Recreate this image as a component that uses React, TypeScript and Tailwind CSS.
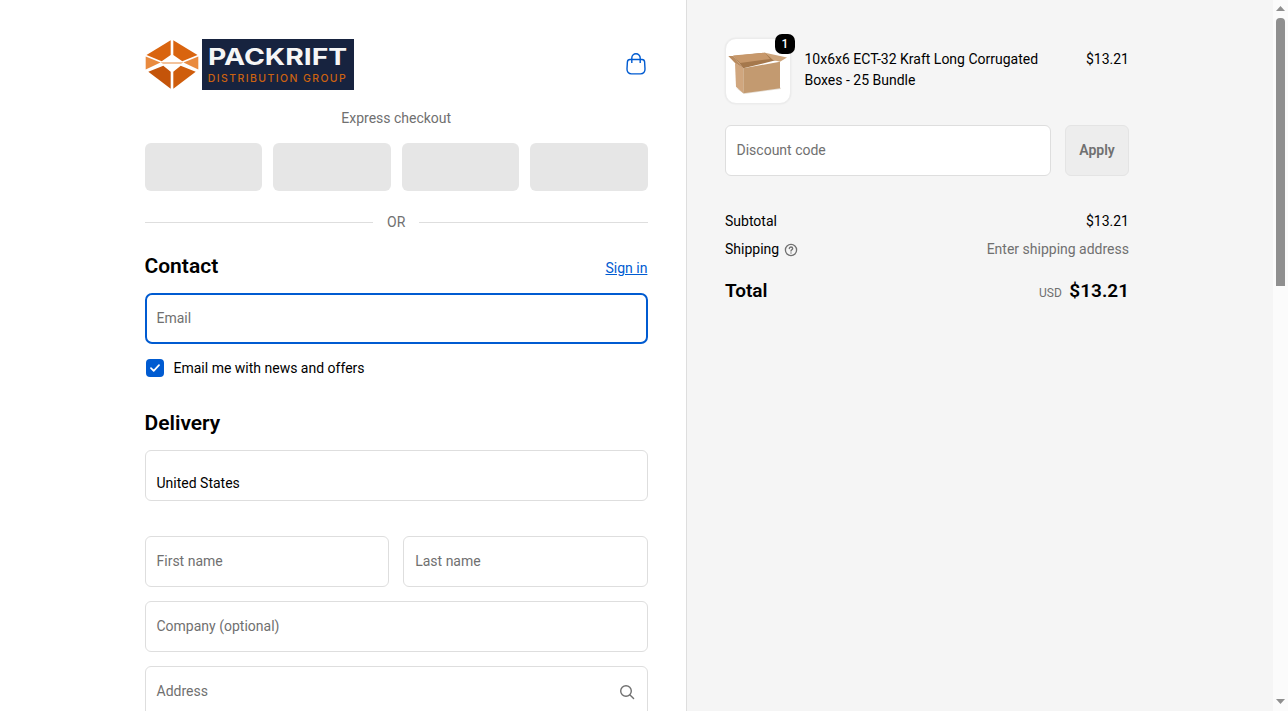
import React from "react";

function Logo() {
  return (
    <div className="flex items-center h-[51px]">
      <svg width="54" height="51" viewBox="0 0 54 51" className="shrink-0">
        <polygon points="25.7,1.2 25.7,16 16.7,22.2 1.5,16" fill="#d9640f" />
        <polygon points="28.3,1.2 28.3,16 37.3,22.2 52.5,16" fill="#d9640f" />
        <polygon points="0.7,17.5 15.5,23.5 0.7,30.5" fill="#e98a3e" />
        <polygon points="53.3,17.5 38.5,23.5 53.3,30.5" fill="#e98a3e" />
        <polygon points="15.5,23.5 38.5,23.5 36,24.6 18,24.6" fill="#e8873a" />
        <polygon points="3.3,32.7 18.3,26.7 25.7,32.7 25.7,49.8" fill="#c4540a" />
        <polygon points="50.7,32.7 35.7,26.7 28.3,32.7 28.3,49.8" fill="#cf5d0c" />
      </svg>
      <div className="ml-[3px] w-[152px] h-[51px] bg-[#17233f] flex flex-col items-center justify-center">
        <div className="text-[#f6f6f6] font-['Inter',sans-serif] font-bold text-[23px] leading-[24px] whitespace-nowrap scale-x-[1.23]">PACKRIFT</div>
        <div className="text-[#cc6210] font-['Inter',sans-serif] font-medium text-[10.5px] leading-[12px] tracking-[1.4px] whitespace-nowrap mt-[4px]">DISTRIBUTION GROUP</div>
      </div>
    </div>
  );
}

function Field({ label, className = "", children }: { label: string; className?: string; children?: React.ReactNode }) {
  return (
    <div className={"h-[51px] border border-[#dedede] rounded-[6px] bg-white flex items-center justify-between pl-[11px] pr-[12px] text-[14px] text-[#707070] " + className}>
      <span>{label}</span>
      {children}
    </div>
  );
}

function BoxImage() {
  return (
    <svg width="64" height="64" viewBox="1 1 64 64">
      <polygon points="11,50 19,56 56,51 55,49 20,54" fill="#e4dcd2" />
      <polygon points="10,25 18.3,30 18.3,55.3 11,48.7" fill="#d0a67e" />
      <polygon points="18.3,30.3 55,23.7 55,50.3 18.3,55.3" fill="#c39a70" />
      <polygon points="8.3,18 40,14.7 51.7,22 18.3,30.3" fill="#a5784c" />
      <polygon points="8,17.5 40,14.7 45,21 15,25" fill="#c7986b" />
      <polygon points="3.3,18 8.3,18 18.3,30.3 10,25" fill="#b98b5f" />
      <polygon points="40,14.7 62,19.5 55,23.7 48,22" fill="#cda57c" />
    </svg>
  );
}

function Scrollbar() {
  return (
    <div className="w-[15px] shrink-0 h-full bg-[#fbfbfb] flex flex-col items-center justify-between pt-[6px] pb-[7px]">
      <div className="flex flex-col items-center w-full">
        <svg width="9" height="5" viewBox="0 0 9 5" fill="#8f8f8f"><polygon points="4.5,0 9,5 0,5" /></svg>
        <div className="w-[9px] h-[268px] mt-[7px] bg-[#8f8f8f] rounded-t-[4px]" />
      </div>
      <svg width="9" height="5" viewBox="0 0 9 5" fill="#8f8f8f"><polygon points="0,0 9,0 4.5,5" /></svg>
    </div>
  );
}

export default function App() {
  return (
    <div className="flex h-screen overflow-hidden font-['Roboto',sans-serif] text-black bg-white">
      <div className="flex flex-1 min-w-0">
      <main className="w-[54%] border-r border-[#dedede] pt-[39px] pl-[144.5px] pr-[38.5px]">
        <div className="flex items-center justify-between">
          <Logo />
          <svg width="22" height="22" viewBox="0 0 22 22" fill="none" stroke="#005bd1" strokeWidth="1.4" className="mt-[-1px] mr-[1px]">
            <path d="M5 6.5h12c1.5 0 2.5 1 2.6 2.4l.4 7c.1 3-1.6 5-4.5 5h-9c-2.9 0-4.6-2-4.5-5l.4-7C2.5 7.5 3.5 6.5 5 6.5z" />
            <path d="M6.8 10V5a4.2 4.2 0 0 1 8.4 0v5" />
          </svg>
        </div>
        <div className="text-center text-[14px] leading-[20px] text-[#707070] mt-[18px]">Express checkout</div>
        <div className="grid grid-cols-4 gap-[10.67px] mt-[15px]">
          <div className="h-[48px] rounded-[6px] bg-[#e6e6e6]" />
          <div className="h-[48px] rounded-[6px] bg-[#e6e6e6]" />
          <div className="h-[48px] rounded-[6px] bg-[#e6e6e6]" />
          <div className="h-[48px] rounded-[6px] bg-[#e6e6e6]" />
        </div>
        <div className="flex items-center gap-[14px] mt-[21px] text-[14px] leading-[20px] text-[#707070]">
          <div className="flex-1 h-px bg-[#dedede]" />
          <span>OR</span>
          <div className="flex-1 h-px bg-[#dedede]" />
        </div>
        <div className="flex items-end justify-between mt-[19px]">
          <h2 className="text-[21px] leading-[30px] font-semibold">Contact</h2>
          <a className="text-[14px] leading-[20px] text-[#005bd1] underline mb-[3px] mr-[0.5px]">Sign in</a>
        </div>
        <div className="h-[51px] mt-[12px] border-2 border-[#005bd1] rounded-[7px] flex items-center pl-[10px] text-[14px] text-[#707070]">Email</div>
        <div className="flex items-center mt-[14px] h-[20px]">
          <div className="w-[18px] h-[18px] ml-px bg-[#005bd1] rounded-[4px] flex items-center justify-center">
            <svg width="10" height="8" viewBox="0 0 10 8" fill="none" stroke="#fff" strokeWidth="1.7" strokeLinecap="round" strokeLinejoin="round">
              <path d="M1 4.2 3.7 6.8 9 1.2" />
            </svg>
          </div>
          <span className="ml-[10px] text-[14px] leading-[20px]">Email me with news and offers</span>
        </div>
        <h2 className="text-[21px] leading-[30px] font-semibold mt-[30px]">Delivery</h2>
        <div className="h-[51px] mt-[12px] border border-[#dedede] rounded-[6px] pl-[11px] pt-[22px] text-[14px] leading-[20px]">United States</div>
        <div className="grid grid-cols-2 gap-[14px] mt-[35px]">
          <Field label="First name" />
          <Field label="Last name" />
        </div>
        <Field label="Company (optional)" className="mt-[14px]" />
        <Field label="Address" className="mt-[14px]">
          <svg width="16" height="16" viewBox="0 0 16 16" fill="none" stroke="#707070" strokeWidth="1.4" strokeLinecap="round">
            <circle cx="7" cy="7" r="5.3" />
            <path d="M11 11l3.6 3.6" />
          </svg>
        </Field>
      </main>
      <aside className="w-[46%] bg-[#f5f5f5] pt-[38px] pl-[37.6px]">
        <div className="w-[404px]">
          <div className="flex">
            <div className="relative w-[66px] h-[66px] bg-white rounded-[11px] border border-[#ececec] shadow-[0_0_2px_rgba(0,0,0,0.08)] flex items-center justify-center shrink-0">
              <BoxImage />
              <div className="absolute top-[-5px] right-[-5px] w-[20px] h-[20px] bg-black text-white rounded-[7px] flex items-center justify-center text-[12px] font-medium">1</div>
            </div>
            <div className="ml-[13.5px] mt-[11px] w-[250px] text-[14px] leading-[21px]">10x6x6 ECT-32 Kraft Long Corrugated Boxes - 25 Bundle</div>
            <div className="ml-auto mt-[11px] text-[14px] leading-[21px]">$13.21</div>
          </div>
          <div className="flex gap-[14px] mt-[21px]">
            <div className="flex-1 h-[51px] bg-white border border-[#dedede] rounded-[6px] flex items-center pl-[10.5px] text-[14px] text-[#707070]">Discount code</div>
            <div className="w-[64px] h-[51px] bg-[#ededed] border border-[#e4e4e4] rounded-[6px] flex items-center justify-center text-[14px] font-semibold text-[#707070]">Apply</div>
          </div>
          <div className="flex justify-between mt-[35px] text-[14px] leading-[20px]">
            <span>Subtotal</span>
            <span>$13.21</span>
          </div>
          <div className="flex justify-between mt-[8px] text-[14px] leading-[20px]">
            <span className="flex items-center">
              Shipping
              <svg width="14" height="14" viewBox="0 0 14 14" fill="none" stroke="#707070" strokeWidth="1.3" strokeLinecap="round" className="ml-[5px] mt-px">
                <circle cx="7" cy="7" r="5.6" />
                <path d="M5.3 5.6c0-1 .8-1.6 1.7-1.6s1.7.6 1.7 1.5c0 1.2-1.7 1.3-1.7 2.5" />
                <path d="M7 10v.1" />
              </svg>
            </span>
            <span className="text-[#707070]">Enter shipping address</span>
          </div>
          <div className="flex justify-between items-center mt-[18px] h-[28px]">
            <span className="text-[19px] font-semibold">Total</span>
            <span className="flex items-center">
              <span className="text-[12px] text-[#707070] mr-[7.5px] mt-[3px]">USD</span>
              <span className="text-[19px] font-semibold">$13.21</span>
            </span>
          </div>
        </div>
      </aside>
      </div>
      <Scrollbar />
    </div>
  );
}
